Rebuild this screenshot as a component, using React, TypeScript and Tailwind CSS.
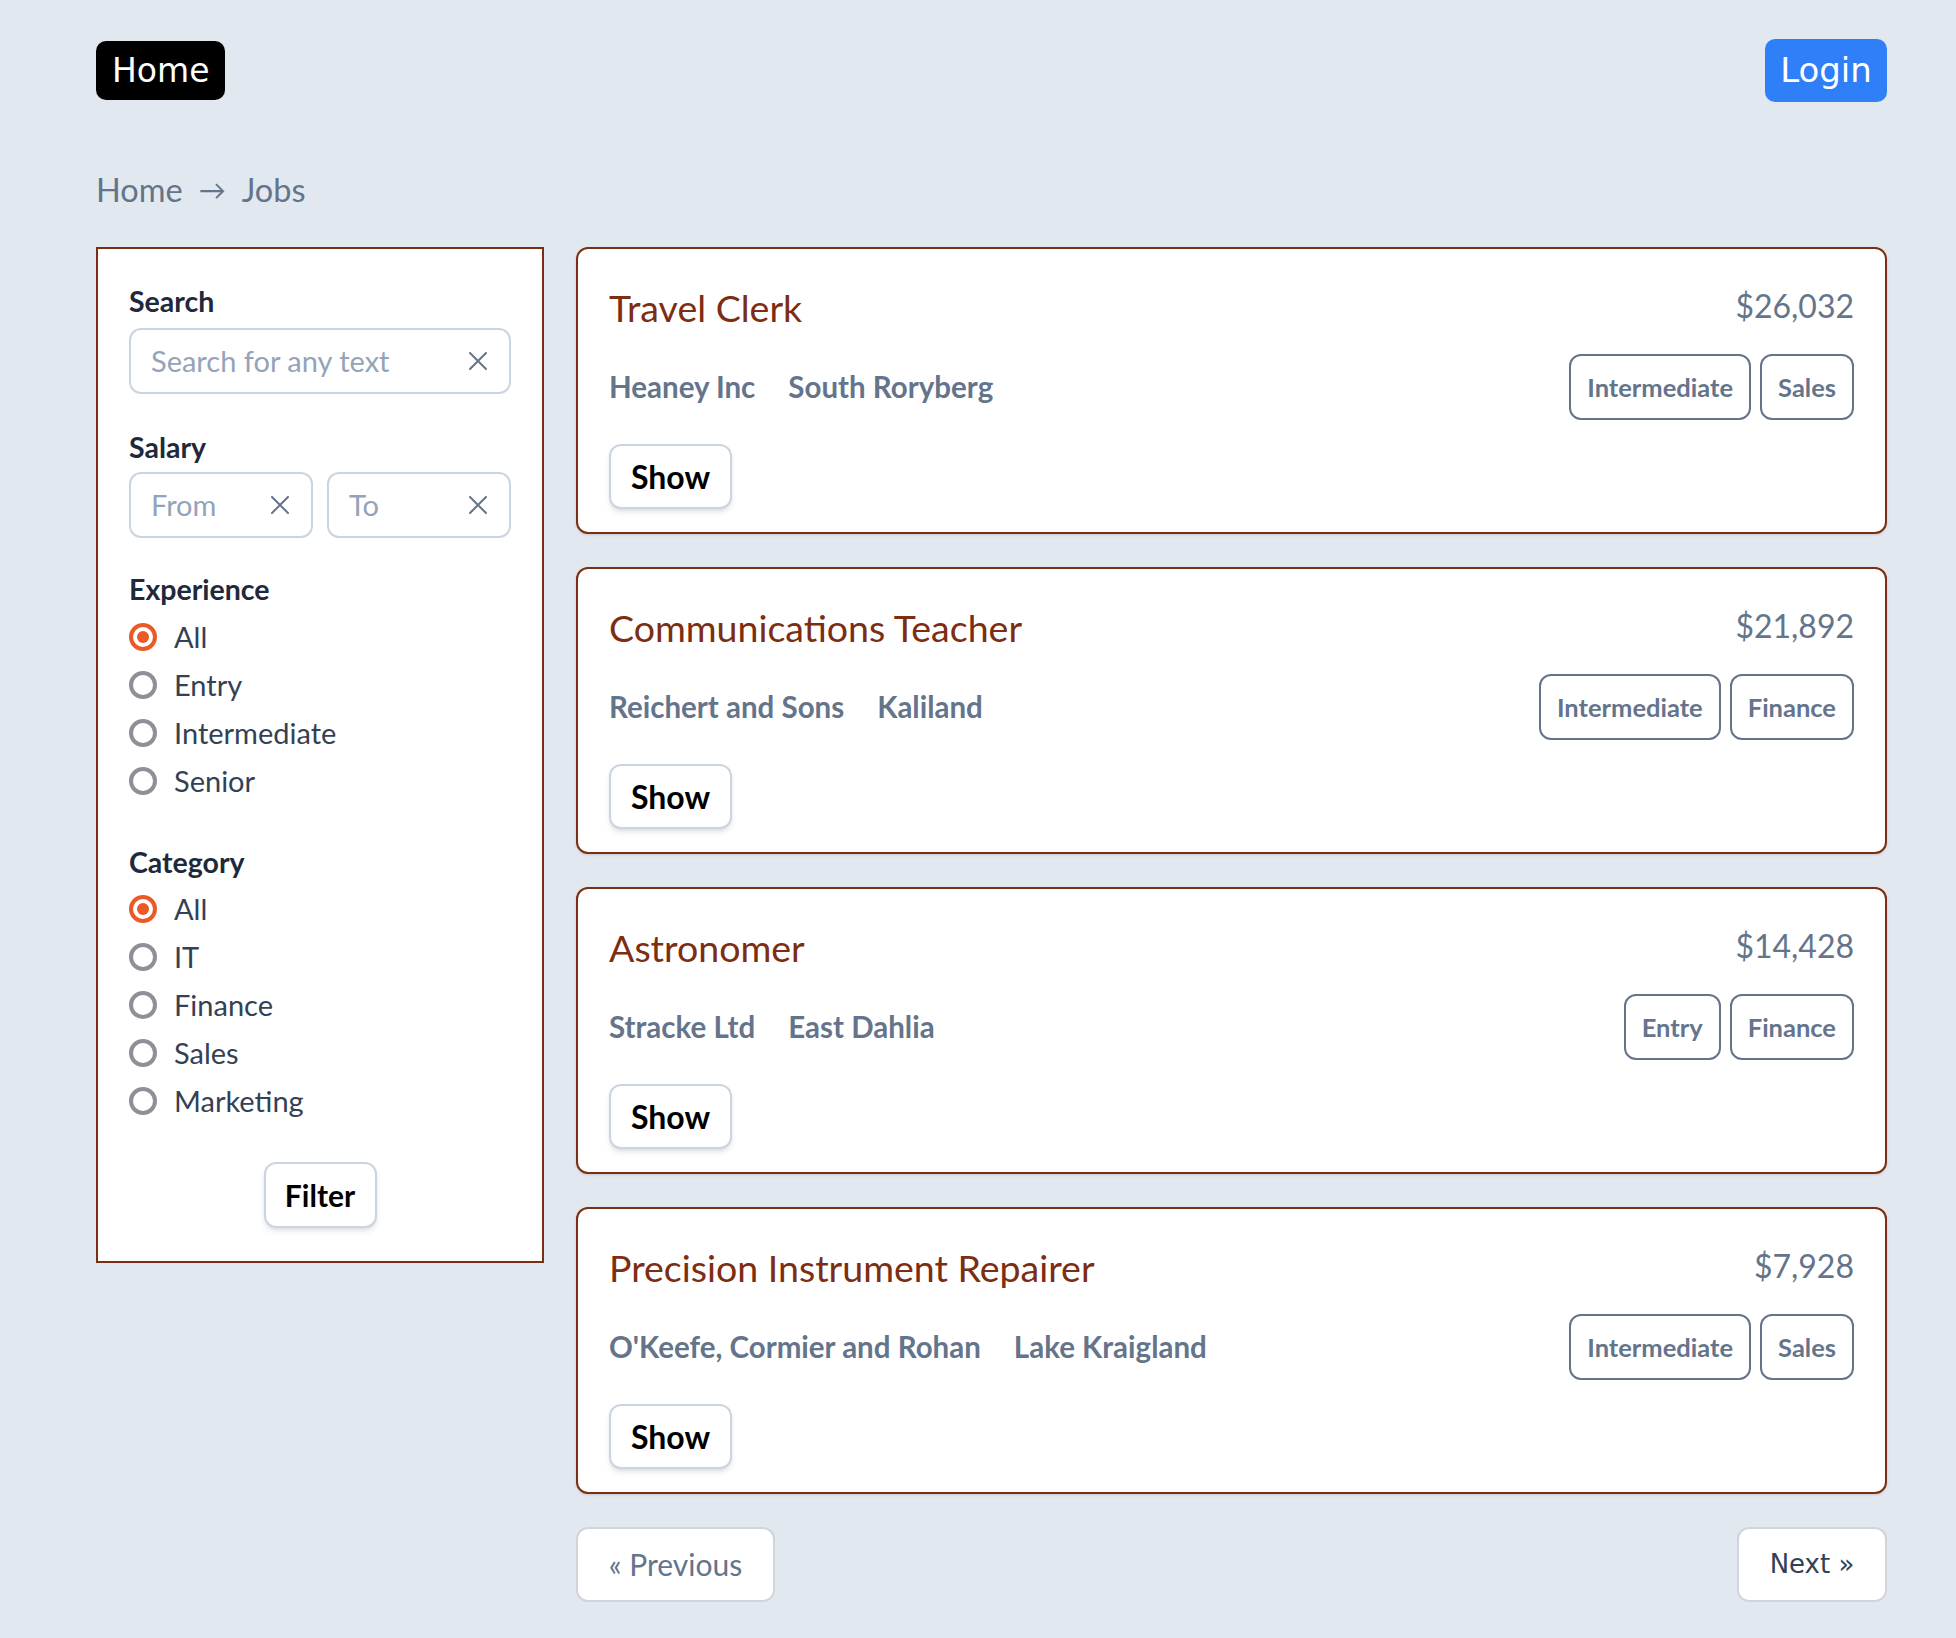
const jobs = [
  {
    title: "Travel Clerk",
    salary: "$26,032",
    company: "Heaney Inc",
    location: "South Roryberg",
    tags: ["Intermediate", "Sales"],
  },
  {
    title: "Communications Teacher",
    salary: "$21,892",
    company: "Reichert and Sons",
    location: "Kaliland",
    tags: ["Intermediate", "Finance"],
  },
  {
    title: "Astronomer",
    salary: "$14,428",
    company: "Stracke Ltd",
    location: "East Dahlia",
    tags: ["Entry", "Finance"],
  },
  {
    title: "Precision Instrument Repairer",
    salary: "$7,928",
    company: "O'Keefe, Cormier and Rohan",
    location: "Lake Kraigland",
    tags: ["Intermediate", "Sales"],
  },
];

const experience = ["All", "Entry", "Intermediate", "Senior"];
const categories = ["All", "IT", "Finance", "Sales", "Marketing"];

const ClearIcon = () => (
  <svg width="18" height="18" viewBox="0 0 18 18" className="shrink-0">
    <path d="M1 1L17 17M17 1L1 17" stroke="#64748b" strokeWidth="2" strokeLinecap="round" />
  </svg>
);

const Radio = ({ label, checked }: { label: string; checked?: boolean }) => (
  <label className="flex items-center h-[48px] gap-[17px]">
    <span
      className={`w-[28px] h-[28px] rounded-full border-[4px] flex items-center justify-center ${
        checked ? "border-[#ea5a27]" : "border-[#8f8f9a]"
      }`}
    >
      {checked && <span className="w-[12px] h-[12px] rounded-full bg-[#ea5a27]" />}
    </span>
    <span className="text-[29px] leading-[36px] text-[#334155]">{label}</span>
  </label>
);

const TextInput = ({ placeholder, className }: { placeholder: string; className?: string }) => (
  <div
    className={`h-[66px] flex items-center justify-between pl-[20px] pr-[22px] border-2 border-[#cbd5e1] rounded-[12px] bg-white ${className ?? ""}`}
  >
    <span className="text-[29px] leading-[36px] text-[#94a3b8]">{placeholder}</span>
    <ClearIcon />
  </div>
);

const Label = ({ children, className }: { children: string; className?: string }) => (
  <h4 className={`text-[28.5px] leading-[32px] font-bold text-[#1e293b] ${className ?? ""}`}>{children}</h4>
);

const Sidebar = () => (
  <aside className="w-[448px] shrink-0 self-start bg-white border-2 border-[#7c2d12] pt-[36px] pb-[33px] px-[31px]">
    <Label>Search</Label>
    <TextInput placeholder="Search for any text" className="mt-[11px]" />

    <Label className="mt-[37px]">Salary</Label>
    <div className="mt-[9px] flex gap-[14px]">
      <TextInput placeholder="From" className="flex-1" />
      <TextInput placeholder="To" className="flex-1" />
    </div>

    <Label className="mt-[35px]">Experience</Label>
    <div className="mt-[8px] flex flex-col">
      {experience.map((e, i) => (
        <Radio key={e} label={e} checked={i === 0} />
      ))}
    </div>

    <Label className="mt-[41px]">Category</Label>
    <div className="mt-[7px] flex flex-col">
      {categories.map((c, i) => (
        <Radio key={c} label={c} checked={i === 0} />
      ))}
    </div>

    <div className="mt-[37px] flex justify-center">
      <button className="w-[113px] h-[66px] border-2 border-[#cbd5e1] rounded-[12px] bg-white shadow-md text-[30px] font-bold text-black">
        Filter
      </button>
    </div>
  </aside>
);

const JobCard = ({ job }: { job: (typeof jobs)[number] }) => (
  <div className="bg-white border-2 border-[#7c2d12] rounded-[12px] shadow-sm pt-[37px] pb-[23px] pl-[31px] pr-[31px]">
    <div className="flex justify-between items-start">
      <h2 className="text-[37.5px] leading-[44px] text-[#7c2d12]">{job.title}</h2>
      <span className="text-[32px] leading-[40px] text-[#64748b]">{job.salary}</span>
    </div>
    <div className="mt-[24px] h-[66px] flex items-center justify-between">
      <div className="flex gap-[33px] text-[29.5px] leading-[34px] font-bold text-[#64748b]">
        <span>{job.company}</span>
        <span>{job.location}</span>
      </div>
      <div className="flex gap-[9px] h-full">
        {job.tags.map((t) => (
          <span
            key={t}
            className="h-full flex items-center px-[16px] border-2 border-[#64748b] rounded-[12px] text-[25.5px] font-bold text-[#64748b]"
          >
            {t}
          </span>
        ))}
      </div>
    </div>
    <button className="mt-[24px] w-[123px] h-[65px] border-2 border-[#cbd5e1] rounded-[12px] bg-white shadow-md text-[32px] font-bold text-black">
      Show
    </button>
  </div>
);

export default function App() {
  return (
    <div
      className="min-h-[1638px] bg-[#e2e8f0] pt-[39px] pl-[96px] pr-[69px]"
      style={{ fontFamily: "Lato, 'Noto Sans', sans-serif" }}
    >
      <header className="h-[63px] flex items-center justify-between">
        <a
          className="h-[59px] flex items-center px-[16px] rounded-[10px] bg-black text-white text-[33px]"
          style={{ fontFamily: "'DejaVu Sans', sans-serif" }}
        >
          Home
        </a>
        <button
          className="h-[63px] w-[122px] rounded-[10px] bg-[#2f80f8] text-white text-[34px]"
          style={{ fontFamily: "'DejaVu Sans', sans-serif" }}
        >
          Login
        </button>
      </header>

      <nav className="mt-[68px] h-[40px] flex items-center gap-[16px] text-[32.5px] text-[#64748b]">
        <span>Home</span>
        <span className="text-[27px]">→</span>
        <span>Jobs</span>
      </nav>

      <div className="mt-[37px] flex gap-[32px] items-start">
        <Sidebar />
        <main className="flex-1 flex flex-col gap-[33px]">
          {jobs.map((job) => (
            <JobCard key={job.title} job={job} />
          ))}
          <div className="flex justify-between">
            <button className="w-[199px] h-[75px] border-2 border-[#d1d5db] rounded-[12px] bg-white text-[30px] text-[#64748b]">
              « Previous
            </button>
            <button
              className="w-[150px] h-[75px] border-2 border-[#d1d5db] rounded-[12px] bg-white text-[26px] text-[#334155]"
              style={{ fontFamily: "'DejaVu Sans', sans-serif" }}
            >
              Next »
            </button>
          </div>
        </main>
      </div>
    </div>
  );
}
